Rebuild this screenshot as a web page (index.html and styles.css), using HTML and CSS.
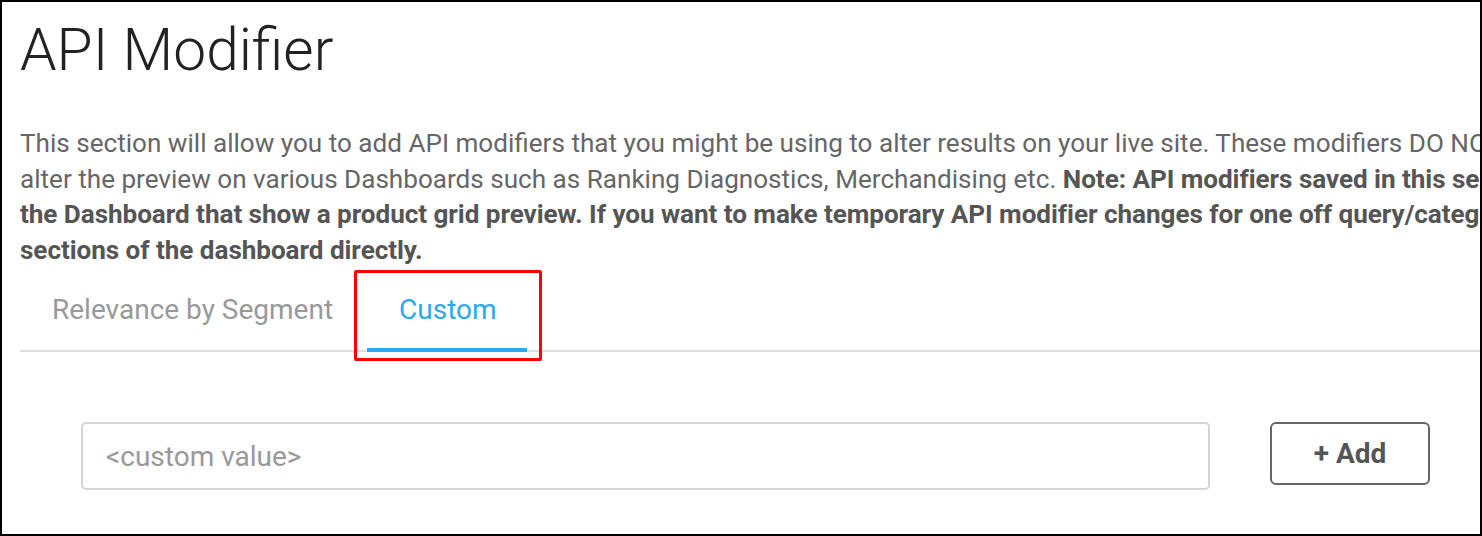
FILE: index.html
```html
<!DOCTYPE html>
<html>
<head>
<meta charset="utf-8">
<link rel="stylesheet" href="styles.css">
</head>
<body>
<div class="frame">
  <h1 class="title">API Modifier</h1>
  <p class="intro">This section will allow you to add API modifiers that you might be using to alter results on your live site. These modifiers DO NOT<br>alter the preview on various Dashboards such as Ranking Diagnostics, Merchandising etc. <b>Note: API modifiers saved in this section will be applied to all sections of<br>the Dashboard that show a product grid preview. If you want to make temporary API modifier changes for one off query/category, please use those<br>sections of the dashboard directly.</b></p>
  <div class="tabs">
    <div class="tab">Relevance by Segment</div>
    <div class="tab tab-active">Custom</div>
  </div>
  <div class="form-row">
    <input class="custom-input" type="text" placeholder="<custom value>">
    <button class="add-btn">+ Add</button>
  </div>
</div>
</body>
</html>
```

FILE: styles.css
```css
html, body {
  margin: 0;
  padding: 0;
  background: #fff;
}
.frame {
  box-sizing: border-box;
  width: 1482px;
  height: 536px;
  border: 2px solid #000;
  padding: 0 0 0 18px;
  overflow: hidden;
  font-family: Roboto, "Liberation Sans", sans-serif;
}
.title {
  margin: 13px 0 0 0;
  font-weight: 300;
  font-size: 58.6px;
  line-height: 70px;
  color: #222;
}
.intro {
  margin: 41px 0 0 0;
  white-space: nowrap;
  font-size: 26.1px;
  line-height: 35.5px;
  color: #666;
  height: 144px;
}
.intro b {
  color: #555;
  font-weight: 700;
  letter-spacing: -0.05px;
}
.tabs {
  display: flex;
  border-bottom: 2px solid #ddd;
  height: 82px;
  box-sizing: border-box;
}
.tab {
  padding: 23px 34px 0 32px;
  font-size: 28px;
  line-height: normal;
  color: #999;
}
.tab-active {
  color: #2aa9ef;
  position: relative;
}
.tab-active::after {
  content: "";
  position: absolute;
  left: 0;
  right: 4px;
  bottom: -2px;
  height: 4px;
  background: #2aa9ef;
}
.tab-active::before {
  content: "";
  position: absolute;
  left: -13px;
  right: -11px;
  top: 0;
  bottom: -11px;
  border: 3px solid #f00;
  border-radius: 2px;
}
.form-row {
  display: flex;
  align-items: flex-start;
  padding: 70px 0 0 61px;
  gap: 60px;
}
.custom-input {
  box-sizing: border-box;
  width: 1129px;
  height: 68px;
  border: 2px solid #d4d4d4;
  border-radius: 5px;
  padding: 0 23px;
  font-family: Roboto, "Liberation Sans", sans-serif;
  font-size: 28px;
  color: #333;
  outline: none;
}
.custom-input::placeholder {
  color: #999;
}
.add-btn {
  box-sizing: border-box;
  width: 160px;
  height: 63px;
  border: 2px solid #666;
  border-radius: 6px;
  background: #fff;
  font-family: Roboto, "Liberation Sans", sans-serif;
  font-weight: 700;
  font-size: 28px;
  color: #555;
}
```
